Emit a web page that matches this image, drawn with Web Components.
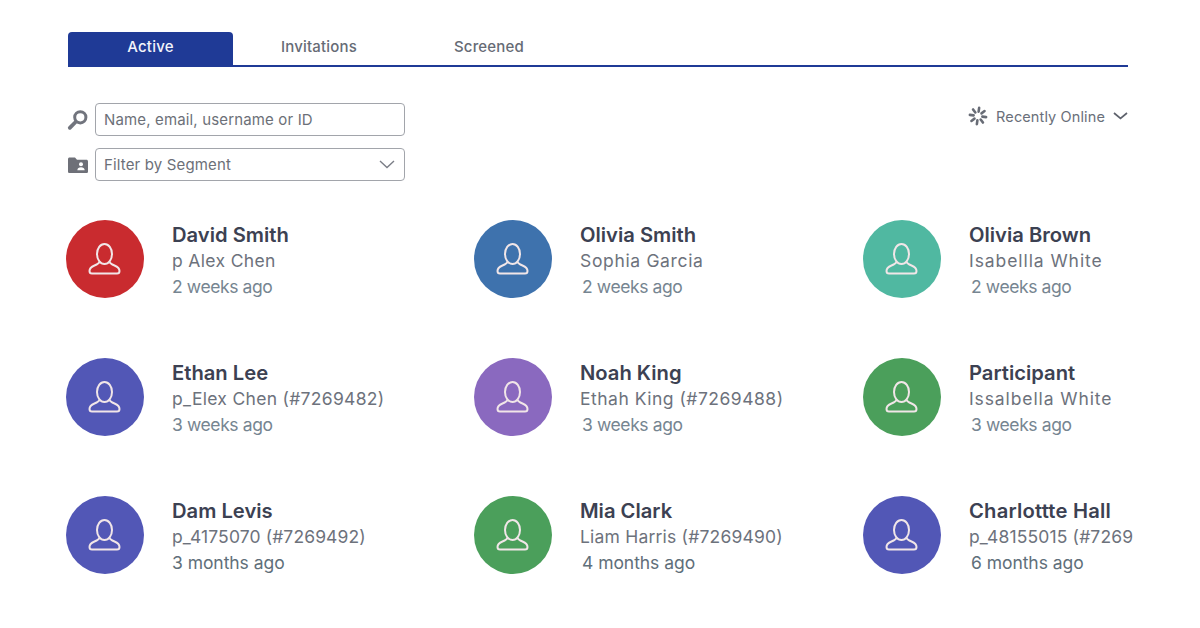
<!DOCTYPE html>
<html lang="en">
<head>
<meta charset="utf-8">
<title>Participants</title>
<style>
  html, body { margin: 0; background: #fff; }
  body { font-family: Inter, "Liberation Sans", sans-serif; height: 628px; overflow: hidden; }
</style>
</head>
<body>
<participants-page>
  <tab-bar slot="tabs">
    <tab-item active style="width:165px">Active</tab-item>
    <tab-item style="width:172px">Invitations</tab-item>
    <tab-item style="width:168px">Screened</tab-item>
  </tab-bar>
  <filter-field slot="filters" icon="search" placeholder="Name, email, username or ID"></filter-field>
  <filter-field slot="filters" icon="folder" placeholder="Filter by Segment" select></filter-field>
  <sort-menu slot="sort">Recently Online</sort-menu>
  <person-card color="#c92b2f" name="David Smith" sub="p Alex Chen" time="2 weeks ago" sub-gap=".35"></person-card>
  <person-card color="#3e72ad" name="Olivia Smith" sub="Sophia Garcia" time="2 weeks ago" sub-gap=".66" shift></person-card>
  <person-card color="#50b8a1" name="Olivia Brown" sub="Isabellla White" time="2 weeks ago" sub-gap=".93" shift></person-card>
  <person-card color="#5257b6" name="Ethan Lee" sub="p_Elex Chen (#7269482)" time="3 weeks ago" sub-gap=".3"></person-card>
  <person-card color="#8a69bf" name="Noah King" sub="Ethah King (#7269488)" time="3 weeks ago" sub-gap=".5" shift></person-card>
  <person-card color="#4b9f5b" name="Participant" sub="Issalbella White" time="3 weeks ago" sub-gap=".9" shift></person-card>
  <person-card color="#5257b6" name="Dam Levis" sub="p_4175070 (#7269492)" time="3 months ago" sub-gap=".12" recent></person-card>
  <person-card color="#4b9f5b" name="Mia Clark" sub="Liam Harris (#7269490)" time="4 months ago" sub-gap=".2" shift recent></person-card>
  <person-card color="#5257b6" name="Charlottte Hall" name-gap=".2" sub="p_48155015 (#7269" time="6 months ago" sub-gap=".15" shift recent></person-card>
</participants-page>

<script>
const ICONS = {
  search: `<svg width="22" height="22" viewBox="0 0 22 22"><circle cx="13.300" cy="8.300" r="5.600" fill="none" stroke="#71747d" stroke-width="3"/><path d="M8.600 13 2.800 18.800" stroke="#71747d" stroke-width="3.800" stroke-linecap="round"/></svg>`,
  folder: `<svg width="22" height="22" viewBox="0 0 22 22"><path d="M1 5.200C1 4.200 1.700 3.600 2.600 3.600H8l2 2.200h9.400c.9 0 1.600.7 1.600 1.600v10c0 .9-.7 1.600-1.600 1.600H2.600C1.700 19 1 18.300 1 17.400Z" fill="#6e7078"/><circle cx="14" cy="10.300" r="2" fill="#fff"/><path d="M10.300 16.200c0-2 1.700-3 3.700-3s3.700 1 3.700 3Z" fill="#fff"/></svg>`
};

class ParticipantsPage extends HTMLElement {
  constructor() {
    super();
    this.attachShadow({ mode: "open" });
    this.shadowRoot.innerHTML = `
      <style>
        :host { display: block; padding: 32px 72px 0 68px; }
        .toolbar { display: flex; justify-content: space-between; align-items: flex-start; margin-top: 36px; }
        .filters { display: flex; flex-direction: column; gap: 12px; }
        .sort { padding-top: 3px; }
        .grid {
          display: grid;
          grid-template-columns: 408px 389px 268px;
          grid-auto-rows: 78px;
          row-gap: 60px;
          margin: 39px -3px 0 -2px;
        }
      </style>
      <slot name="tabs"></slot>
      <div class="toolbar">
        <div class="filters"><slot name="filters"></slot></div>
        <div class="sort"><slot name="sort"></slot></div>
      </div>
      <div class="grid"><slot></slot></div>`;
  }
}

class TabBar extends HTMLElement {
  constructor() {
    super();
    this.attachShadow({ mode: "open" });
    this.shadowRoot.innerHTML = `
      <style>:host { display: flex; border-bottom: 2px solid #1f3a96; }</style>
      <slot></slot>`;
  }
}

class TabItem extends HTMLElement {
  constructor() {
    super();
    this.attachShadow({ mode: "open" });
    this.shadowRoot.innerHTML = `
      <style>
        :host {
          display: flex; align-items: center; justify-content: center;
          box-sizing: border-box; height: 33px; padding-bottom: 4px;
          font-size: 15px; font-weight: 500; color: #666b75; letter-spacing: .2px;
          border-radius: 4px 4px 0 0;
        }
        :host([active]) { background: #1f3a96; color: #f2f4fa; }
      </style>
      <slot></slot>`;
  }
}

class FilterField extends HTMLElement {
  constructor() {
    super();
    this.attachShadow({ mode: "open" });
    const arrow = this.hasAttribute("select")
      ? `<svg width="16" height="9" viewBox="0 0 16 9"><path d="M1 1l7 6.500L15 1" fill="none" stroke="#7b7e87" stroke-width="1.400"/></svg>`
      : "";
    this.shadowRoot.innerHTML = `
      <style>
        :host { display: flex; align-items: center; gap: 6px; }
        .icon { display: flex; width: 22px; height: 22px; margin-left: -1px; }
        .box {
          display: flex; align-items: center; justify-content: space-between;
          box-sizing: border-box; width: 310px; height: 33px; padding: 0 9px 0 8px;
          border: 1px solid #a2a5ab; border-radius: 4px;
          font-size: 15px; color: #6c7078; letter-spacing: .15px;
        }
      </style>
      <span class="icon">${ICONS[this.getAttribute("icon")]}</span>
      <div class="box"><span>${this.getAttribute("placeholder")}</span>${arrow}</div>`;
  }
}

class SortMenu extends HTMLElement {
  constructor() {
    super();
    this.attachShadow({ mode: "open" });
    // eight short spokes, the same as a loading spinner
    let spokes = "";
    for (let i = 0; i < 8; i++) {
      spokes += `<path d="M10 1.800V5.600" transform="rotate(${i * 45 + 8} 10 10)" stroke="#686c76" stroke-width="2.600" stroke-linecap="round"/>`;
    }
    this.shadowRoot.innerHTML = `
      <style>
        :host { display: flex; align-items: center; font-size: 14.500px; color: #6a6f7a; letter-spacing: .12px; }
        svg { display: block; }
        .spin { margin-right: 8px; }
        .arrow { margin-left: 8px; }
      </style>
      <svg class="spin" width="20" height="20" viewBox="0 0 20 20">${spokes}</svg>
      <slot></slot>
      <svg class="arrow" width="15" height="8" viewBox="0 0 15 8"><path d="M1 1l6.500 5.500L14 1" fill="none" stroke="#5e626c" stroke-width="1.700"/></svg>`;
  }
}

class PersonCard extends HTMLElement {
  constructor() {
    super();
    this.attachShadow({ mode: "open" });
    const attr = (n) => this.getAttribute(n);
    this.shadowRoot.innerHTML = `
      <style>
        :host { display: flex; min-width: 0; white-space: nowrap; }
        .avatar {
          flex: none; display: flex; align-items: center; justify-content: center;
          width: 78px; height: 78px; margin-right: 28px; border-radius: 50%;
          background: ${attr("color")};
        }
        .text { display: flex; flex-direction: column; min-width: 0; line-height: 26px; margin-top: 2px; }
        .name { font-size: 20.200px; font-weight: 600; color: #3c4152; letter-spacing: ${attr("name-gap") || 0}px; }
        .sub { font-size: 17.500px; color: #6d727c; letter-spacing: ${attr("sub-gap")}px; }
        .time { font-size: 17.500px; color: #768591; letter-spacing: -.4px; }
        :host([shift]) .time { padding-left: 2px; }
        :host([recent]) .time { color: #5f6f7a; letter-spacing: -.05px; }
      </style>
      <div class="avatar">
        <svg width="36" height="36" viewBox="0 0 36 36" fill="none" stroke="#f1e6e8" stroke-width="2">
          <ellipse cx="17.500" cy="13" rx="7.500" ry="10"/>
          <path d="M12.500 21c-.5 1.500-2.500 2.500-5 3.500-3 1.200-5 3-5 5.500 0 1.600 1 2.500 2.500 2.500h25c1.500 0 2.500-.9 2.500-2.500 0-2.500-2-4.300-5-5.500-2.500-1-4.500-2-5-3.500"/>
        </svg>
      </div>
      <div class="text">
        <span class="name">${attr("name")}</span>
        <span class="sub">${attr("sub")}</span>
        <span class="time">${attr("time")}</span>
      </div>`;
  }
}

customElements.define("participants-page", ParticipantsPage);
customElements.define("tab-bar", TabBar);
customElements.define("tab-item", TabItem);
customElements.define("filter-field", FilterField);
customElements.define("sort-menu", SortMenu);
customElements.define("person-card", PersonCard);
</script>
</body>
</html>
